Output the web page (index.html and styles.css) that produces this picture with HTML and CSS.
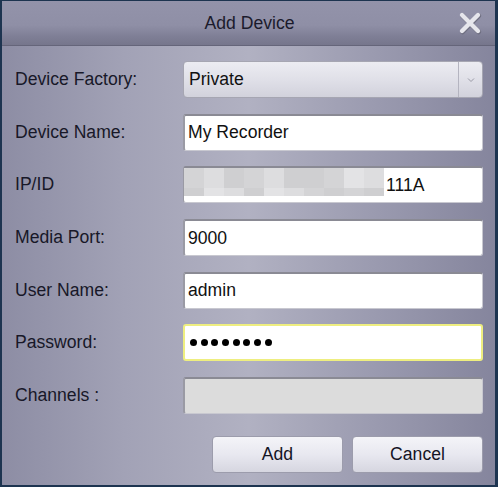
FILE: index.html
```html
<!DOCTYPE html>
<html lang="en">
<head>
  <meta charset="UTF-8">
  <meta name="viewport" content="width=device-width, initial-scale=1.0">
  <title>Add Device</title>
  <link rel="stylesheet" href="styles.css">
</head>
<body>
  <div class="dialog">
    <div class="title-bar">
      <span class="title">Add Device</span>
      <svg class="close-btn" width="24" height="24" viewBox="0 0 24 24">
        <path d="M4 4 L20 20 M20 4 L4 20" stroke="#6e6e80" stroke-width="5" stroke-linecap="round" transform="translate(0.6 0.8)"/>
        <path d="M4 4 L20 20 M20 4 L4 20" stroke="#e6e6ec" stroke-width="4.4" stroke-linecap="round"/>
      </svg>
    </div>

    <div class="dialog-body">
      <div class="form">
        <label>Device Factory:</label>
        <div class="combo">
          <span class="combo-value">Private</span>
          <span class="combo-arrow">
            <svg width="8" height="6" viewBox="0 0 8 6"><path d="M1 1.5 L4 4.5 L7 1.5" fill="none" stroke="#9a9aa6" stroke-width="1"/></svg>
          </span>
        </div>

        <label>Device Name:</label>
        <div class="field">My Recorder</div>

        <label>IP/ID</label>
        <div class="field field-ip">
          <div class="mosaic">
            <i class="m2"></i><i class="m1"></i><i class="m3"></i><i class="m2"></i><i class="m1"></i><i class="m3"></i><i class="m3"></i><i class="m2"></i><i class="m4"></i><i class="m1"></i>
            <i class="m3"></i><i class="m4"></i><i class="m1"></i><i class="m3"></i><i class="m4"></i><i class="m1"></i><i class="m2"></i><i class="m3"></i><i class="m2"></i><i class="m3"></i>
          </div>
          <span>111A</span>
        </div>

        <label>Media Port:</label>
        <div class="field">9000</div>

        <label>User Name:</label>
        <div class="field">admin</div>

        <label>Password:</label>
        <div class="field field-focus">
          <span class="dot"></span><span class="dot"></span><span class="dot"></span><span class="dot"></span>
          <span class="dot"></span><span class="dot"></span><span class="dot"></span><span class="dot"></span>
        </div>

        <label>Channels :</label>
        <div class="field field-disabled"></div>
      </div>

      <div class="actions">
        <button class="btn">Add</button>
        <button class="btn">Cancel</button>
      </div>
    </div>
  </div>
</body>
</html>
```

FILE: styles.css
```css
body, html {
  margin: 0;
  padding: 0;
  font-family: 'Liberation Sans', Arial, sans-serif;
  background: #1d3450;
}

.dialog {
  width: 498px;
  height: 487px;
  box-sizing: border-box;
  border: 2px solid #1d3450;
  border-top-width: 1px;
  border-right-width: 3px;
  display: flex;
  flex-direction: column;
}

.title-bar {
  height: 44px;
  flex-shrink: 0;
  position: relative;
  display: flex;
  align-items: center;
  justify-content: center;
  background: linear-gradient(to bottom, #9393aa 0%, #8f8fa6 55%, #7f7f96 80%, #76768c 100%);
  border-bottom: 1px solid #65657a;
}

.title {
  font-size: 17.6px;
  color: #1b1b2c;
  margin-left: 2px;
}

.close-btn {
  position: absolute;
  right: 13px;
  top: 10px;
}

.dialog-body {
  flex: 1;
  padding: 15px 12px 0 12px;
  background: linear-gradient(to right, #8d8da4 0%, #a2a2b6 25%, #b1b1c2 50%, #9b9bb0 75%, #85859d 100%);
}

.form {
  display: grid;
  grid-template-columns: 169px 300px;
  grid-auto-rows: 37px;
  row-gap: 15.7px;
  align-items: center;
}

.form label {
  font-size: 17.6px;
  color: #181828;
  padding-left: 1px;
}

.field {
  height: 37px;
  box-sizing: border-box;
  background: #fff;
  border: 1px solid #c8c8d0;
  border-top: 2px solid #8a8a94;
  border-left: 2px solid #9a9aa4;
  border-radius: 3px;
  padding: 0 5px 0 3px;
  display: flex;
  align-items: center;
  font-size: 17.6px;
  color: #111;
}

.field-focus {
  border: 2px solid #eeee80;
  gap: 3.7px;
  padding-left: 5px;
}

.dot {
  width: 7px;
  height: 7px;
  border-radius: 50%;
  background: #000;
}

.field-disabled {
  background: #dcdcdc;
}

.field-ip {
  padding-left: 0;
  border-left-width: 1px;
  align-items: flex-start;
  overflow: hidden;
}

.field-ip span {
  margin-top: 7px;
  margin-left: 2px;
}

.mosaic {
  display: grid;
  grid-template-columns: repeat(10, 20px);
  grid-template-rows: 22px 8px;
  margin-top: -2px;
}

.mosaic i { display: block; }
.mosaic .m1 { background: #dddddf; }
.mosaic .m2 { background: #d4d4d6; }
.mosaic .m3 { background: #cfcfd1; }
.mosaic .m4 { background: #e3e3e5; }

.combo {
  height: 37px;
  box-sizing: border-box;
  display: flex;
  align-items: stretch;
  border: 1px solid #a6a6b2;
  border-radius: 4px;
  background: linear-gradient(to bottom, #ececf2 0%, #e0e0e8 50%, #d2d2dc 100%);
  font-size: 17.6px;
  color: #111;
}

.combo-value {
  flex: 1;
  display: flex;
  align-items: center;
  padding-left: 5px;
  border-right: 1px solid #b4b4c0;
}

.combo-arrow {
  width: 23px;
  display: flex;
  align-items: center;
  justify-content: center;
}

.actions {
  display: flex;
  justify-content: flex-end;
  gap: 9px;
  margin-top: 22px;
}

.btn {
  width: 131px;
  height: 37px;
  font-family: 'Liberation Sans', Arial, sans-serif;
  font-size: 17.6px;
  color: #141424;
  background: linear-gradient(to bottom, #f4f4f8 0%, #e8e8f0 50%, #d6d6e0 100%);
  border: 1px solid #9c9cac;
  border-radius: 4px;
  cursor: pointer;
}
```
